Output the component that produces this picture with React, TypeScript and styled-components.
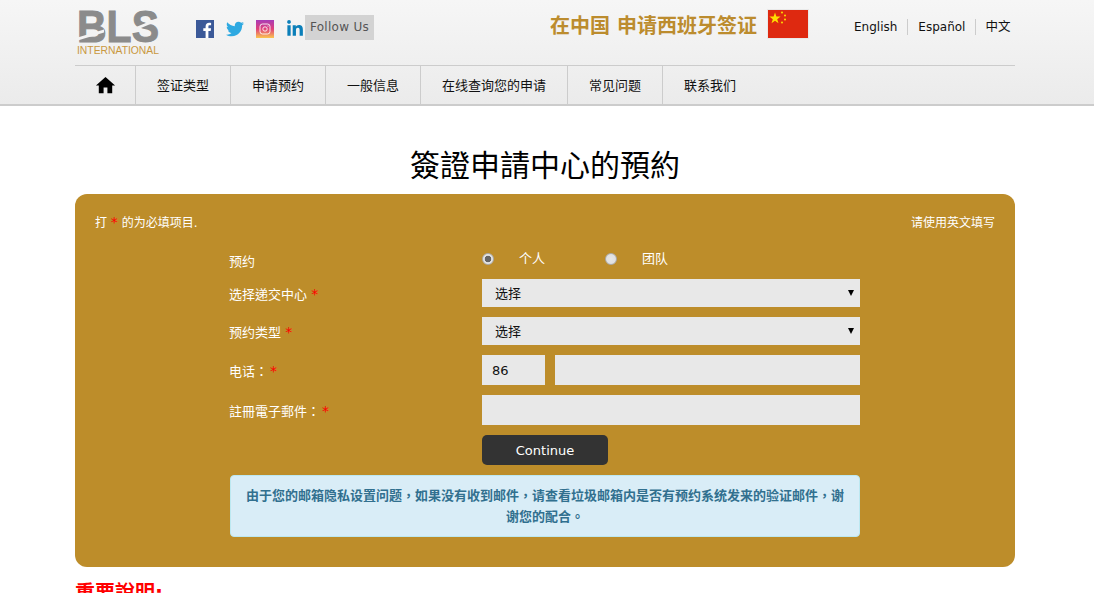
import styled, { createGlobalStyle } from "styled-components";
import { FaLinkedinIn, FaTwitter } from "react-icons/fa";
import { MdHome } from "react-icons/md";

const cjk = `"DejaVu Sans", "Noto Sans CJK SC", sans-serif`;
const cjkTc = `"DejaVu Sans", "Noto Sans CJK TC", sans-serif`;

const GlobalStyle = createGlobalStyle`
  html, body {
    margin: 0;
    height: 593px;
    overflow: hidden;
    background: #fff;
    font-family: ${cjk};
  }
  * {
    box-sizing: border-box;
  }
`;

const Header = styled.header`
  height: 106px;
  background: linear-gradient(#f6f6f6, #ebebeb);
  border-bottom: 2px solid #ccc;
`;

const Container = styled.div`
  width: 940px;
  margin-left: 75px;
`;

const TopRow = styled.div`
  height: 65px;
  display: flex;
  align-items: flex-start;
  border-bottom: 1px solid #ccc;
  box-sizing: content-box;
`;

const Logo = styled.svg`
  width: 84px;
  height: 46px;
  margin: 9px 0 0 2px;
  flex: none;
  overflow: visible;
`;

const Social = styled.div`
  display: flex;
  align-items: center;
  gap: 12px;
  margin: 20px 0 0 35px;
  height: 18px;
  width: 109px;
  flex: none;
`;

const FollowUs = styled.span`
  width: 69px;
  height: 25px;
  margin-top: 15px;
  background: #d3d3d3;
  color: #555;
  font-size: 12px;
  letter-spacing: 0.3px;
  line-height: 25px;
  text-align: center;
  flex: none;
`;

const Slogan = styled.div`
  margin: 13px 0 0 176px;
  width: 217px;
  flex: none;
  color: #bc8c2e;
  font-size: 20px;
  font-weight: bold;
  line-height: 26px;
  white-space: nowrap;
`;

const Flag = styled.svg`
  width: 42px;
  height: 30px;
  margin-top: 9px;
  flex: none;
`;

const Languages = styled.nav`
  display: flex;
  margin: 19px 0 0 45px;
`;

const LangLink = styled.a`
  font-size: 12px;
  line-height: 16px;
  color: #111;
  padding: 0 10px;
  border-left: 1px solid #ccc;
  &:first-child {
    border-left: 0;
    padding-left: 0;
  }
  &:last-child {
    padding: 0 0 0 9px;
    font-size: 12.5px;
  }
`;

const Menu = styled.nav`
  height: 38px;
  display: flex;
`;

const MenuItem = styled.a`
  display: flex;
  align-items: center;
  justify-content: center;
  padding: 0 21px 2px;
  font-size: 13px;
  color: #111;
  border-right: 1px solid #ccc;
  &:last-child {
    border-right: 0;
  }
`;

const HomeItem = styled(MenuItem)`
  width: 61px;
  padding: 0;
  color: #000;
`;

const Title = styled.h1`
  margin: 40px 0 0;
  height: 48px;
  font-size: 30px;
  font-weight: normal;
  line-height: 40px;
  text-align: center;
  color: #000;
`;

const Panel = styled.section`
  height: 373px;
  background: #bd8d2a;
  border-radius: 12px;
  padding: 21px 20px 20px;
  color: #fff;
  font-size: 13px;
`;

const Notes = styled.div`
  display: flex;
  justify-content: space-between;
  font-size: 12px;
  line-height: 17px;
`;

const Star = styled.span<{ $tight?: boolean }>`
  color: #f00;
  font-size: 14px;
  line-height: 0;
  margin-left: ${(p) => (p.$tight ? "2px" : "0")};
`;

const Form = styled.form`
  width: 631px;
  margin: 17px 0 0 134px;
`;

const Row = styled.div<{ $height: number }>`
  display: grid;
  grid-template-columns: 253px 378px;
  align-items: center;
  height: ${(p) => p.$height}px;
  margin-bottom: 10px;
`;

const Label = styled.label`
  margin-top: 3px;
  line-height: 18px;
  font-family: ${cjkTc};
`;

const PlainLabel = styled(Label)`
  margin-top: 4px;
`;

const RadioGroup = styled.div`
  display: flex;
  align-items: center;
  margin-top: -2px;
`;

const RadioOption = styled.label`
  display: flex;
  align-items: center;
  width: 123px;
  line-height: 18px;
`;

const Radio = styled.input`
  appearance: none;
  width: 12px;
  height: 12px;
  margin: 0 25px 0 0;
  border-radius: 50%;
  border: 1px solid #aaa;
  background: radial-gradient(circle, #e6e6e6, #ddd);
  &:checked {
    background: radial-gradient(circle, #666 0 3px, #e4e4e4 3.6px);
  }
`;

const SelectWrap = styled.div`
  position: relative;
  height: 28px;
  &::after {
    content: "";
    position: absolute;
    right: 6px;
    top: 11px;
    border: 3.5px solid transparent;
    border-top: 6px solid #000;
    border-bottom: 0;
  }
`;

const Select = styled.select`
  appearance: none;
  display: block;
  width: 100%;
  height: 100%;
  border: 0;
  border-radius: 0;
  padding: 0 13px;
  background: #e8e8e8;
  color: #111;
  font: 13px ${cjk};
`;

const Input = styled.input`
  display: block;
  width: 100%;
  height: 30px;
  border: 0;
  padding: 0 10px;
  background: #e8e8e8;
  color: #111;
  font: 13px ${cjk};
`;

const PhoneRow = styled.div`
  display: grid;
  grid-template-columns: 63px 305px;
  gap: 10px;
`;

const Continue = styled.button`
  width: 126px;
  height: 30px;
  border: 0;
  border-radius: 5px;
  background: #333;
  color: #fff;
  font: 13px ${cjk};
`;

const Notice = styled.div`
  width: 630px;
  margin-left: 1px;
  padding: 10px 15px 9px;
  background: #d9edf7;
  border: 1px solid #bce8f1;
  border-radius: 4px;
  color: #31708f;
  font-family: ${cjkTc};
  font-weight: bold;
  line-height: 20.5px;
  text-align: center;
`;

const Important = styled.h2`
  margin: 12px 0 0;
  color: #f00;
  font-size: 20px;
  line-height: 28px;
  font-weight: bold;
`;

function FacebookIcon() {
  return (
    <svg width="18" height="18" viewBox="0 0 18 18">
      <rect width="18" height="18" fill="#3b5998" />
      <path d="M12.4 18v-7h2.3l.4-2.7h-2.7V6.6c0-.8.2-1.3 1.3-1.3h1.4V2.9c-.3 0-1.1-.1-2-.1-2.1 0-3.5 1.3-3.5 3.6v1.9H7.3V11h2.3v7z" fill="#fff" />
    </svg>
  );
}

function InstagramIcon() {
  return (
    <svg width="18" height="18" viewBox="0 0 18 18">
      <defs>
        <linearGradient id="ig" x1="0" y1="0" x2="0" y2="1">
          <stop offset="0" stopColor="#a83bb8" />
          <stop offset="0.5" stopColor="#e0407a" />
          <stop offset="1" stopColor="#fbc64f" />
        </linearGradient>
      </defs>
      <rect width="18" height="18" fill="url(#ig)" />
      <rect x="4" y="4" width="10" height="10" rx="2.5" fill="none" stroke="#fff" strokeOpacity="0.85" />
      <circle cx="9" cy="9" r="2.2" fill="none" stroke="#fff" strokeOpacity="0.85" />
      <circle cx="12" cy="6" r="0.6" fill="#fff" />
    </svg>
  );
}

const menu = ["签证类型", "申请预约", "一般信息", "在线查询您的申请", "常见问题", "联系我们"];

export default function App() {
  return (
    <>
      <GlobalStyle />
      <Header>
        <Container>
          <TopRow>
            <Logo viewBox="0 0 84 46">
              <text x="0" y="33" fontFamily="Liberation Sans" fontWeight="bold" fontSize="44" fill="#8b8b8b" stroke="#8b8b8b" strokeWidth="1" textLength="82" lengthAdjust="spacingAndGlyphs">
                BLS
              </text>
              <path d="M-1 29 L27 20.5 L27 23.5 L-1 32 Z" fill="#f3f3f3" />
              <path d="M52 21 L83 8 L83 11 L52 24 Z" fill="#f3f3f3" />
              <text x="0" y="45" fontFamily="Liberation Sans" fontSize="11" fill="#c9983f" textLength="82" lengthAdjust="spacingAndGlyphs">
                INTERNATIONAL
              </text>
            </Logo>
            <Social>
              <FacebookIcon />
              <FaTwitter size={18} color="#2ea9e1" style={{ flex: "none" }} />
              <InstagramIcon />
              <FaLinkedinIn size={18} color="#0b7fb9" style={{ flex: "none" }} />
            </Social>
            <FollowUs>Follow Us</FollowUs>
            <Slogan>在中国 申请西班牙签证</Slogan>
            <Flag viewBox="0 0 42 30">
              <rect width="42" height="30" fill="#e9e9e9" />
              <rect x="1" y="1" width="40" height="28" fill="#de2910" />
              <polygon
                points="8,3.5 9.4,7.6 13.6,7.6 10.2,10.2 11.5,14.3 8,11.8 4.5,14.3 5.8,10.2 2.4,7.6 6.6,7.6"
                fill="#ffde00"
              />
              <circle cx="15" cy="3.5" r="1" fill="#ffde00" />
              <circle cx="18" cy="6.5" r="1" fill="#ffde00" />
              <circle cx="18" cy="10.5" r="1" fill="#ffde00" />
              <circle cx="15" cy="13.5" r="1" fill="#ffde00" />
            </Flag>
            <Languages>
              <LangLink>English</LangLink>
              <LangLink>Español</LangLink>
              <LangLink>中文</LangLink>
            </Languages>
          </TopRow>
          <Menu>
            <HomeItem>
              <MdHome size={23} />
            </HomeItem>
            {menu.map((item) => (
              <MenuItem key={item}>{item}</MenuItem>
            ))}
          </Menu>
        </Container>
      </Header>
      <Container>
        <Title>簽證申請中心的預約</Title>
        <Panel>
          <Notes>
            <span>
              打 <Star>*</Star> 的为必填项目.
            </span>
            <span>请使用英文填写</span>
          </Notes>
          <Form>
            <Row $height={20}>
              <PlainLabel>预约</PlainLabel>
              <RadioGroup>
                <RadioOption>
                  <Radio type="radio" name="kind" defaultChecked />
                  个人
                </RadioOption>
                <RadioOption>
                  <Radio type="radio" name="kind" />
                  团队
                </RadioOption>
              </RadioGroup>
            </Row>
            <Row $height={28}>
              <Label>
                选择递交中心 <Star>*</Star>
              </Label>
              <SelectWrap>
                <Select>
                  <option>选择</option>
                </Select>
              </SelectWrap>
            </Row>
            <Row $height={28}>
              <Label>
                预约类型 <Star>*</Star>
              </Label>
              <SelectWrap>
                <Select>
                  <option>选择</option>
                </Select>
              </SelectWrap>
            </Row>
            <Row $height={30}>
              <Label>
                电话：<Star $tight>*</Star>
              </Label>
              <PhoneRow>
                <Input defaultValue="86" />
                <Input />
              </PhoneRow>
            </Row>
            <Row $height={30}>
              <Label>
                註冊電子郵件：<Star $tight>*</Star>
              </Label>
              <Input />
            </Row>
            <Row $height={30}>
              <span />
              <Continue type="button">Continue</Continue>
            </Row>
            <Notice>
              由于您的邮箱隐私设置问题，如果没有收到邮件，请查看垃圾邮箱内是否有预约系统发来的验证邮件，谢谢您的配合。
            </Notice>
          </Form>
        </Panel>
        <Important>重要說明:</Important>
      </Container>
    </>
  );
}
